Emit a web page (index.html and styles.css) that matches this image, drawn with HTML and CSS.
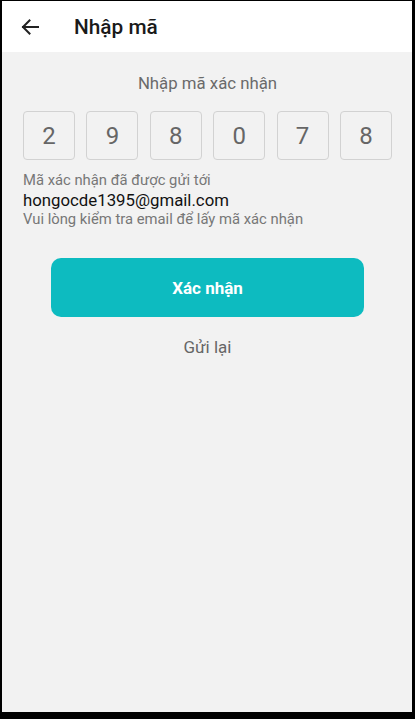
FILE: index.html
```html
<!DOCTYPE html>
<html lang="vi">
<head>
<meta charset="utf-8">
<title>Nhập mã</title>
<link rel="stylesheet" href="styles.css">
</head>
<body>
<div class="screen">
  <header class="appbar">
    <svg class="back" width="20" height="20" viewBox="0 0 20 20" aria-hidden="true">
      <path d="M18 10H3M9.5 3.5L3 10l6.5 6.5" fill="none" stroke="#222" stroke-width="2" stroke-linecap="square" stroke-linejoin="miter"/>
    </svg>
    <h1 class="title">Nhập mã</h1>
  </header>
  <main class="content">
    <p class="prompt">Nhập mã xác nhận</p>
    <div class="code">
      <div class="digit">2</div>
      <div class="digit">9</div>
      <div class="digit">8</div>
      <div class="digit">0</div>
      <div class="digit">7</div>
      <div class="digit">8</div>
    </div>
    <div class="info">
      <p class="muted">Mã xác nhận đã được gửi tới</p>
      <p class="email">hongocde1395@gmail.com</p>
      <p class="muted">Vui lòng kiểm tra email để lấy mã xác nhận</p>
    </div>
    <button class="confirm">Xác nhận</button>
    <p class="resend">Gửi lại</p>
  </main>
</div>
</body>
</html>
```

FILE: styles.css
```css
html, body {
  margin: 0;
  padding: 0;
  background: #000;
  height: 719px;
  overflow: hidden;
}
body {
  font-family: Roboto, "Noto Sans", sans-serif;
}
.screen {
  margin: 1px 3px 0 2px;
  height: 711px;
  background: #f2f2f2;
  display: flex;
  flex-direction: column;
}
.appbar {
  height: 51px;
  background: #fff;
  display: flex;
  align-items: center;
  flex-shrink: 0;
}
.back {
  margin-left: 18px;
}
.title {
  margin: 0 0 0 34px;
  font-size: 20.8px;
  font-weight: 500;
  color: #1a1a1a;
  line-height: 24px;
}
.content {
  flex: 1;
  padding: 0 20px 0 21px;
  display: flex;
  flex-direction: column;
}
.prompt {
  margin: 21px 0 0;
  text-align: center;
  font-size: 16.8px;
  line-height: 20px;
  color: #6a6a6a;
}
.code {
  margin-top: 18px;
  display: flex;
  justify-content: space-between;
}
.digit {
  width: 50px;
  height: 47px;
  border: 1px solid #d2d2d2;
  border-radius: 4px;
  display: flex;
  align-items: center;
  justify-content: center;
  font-size: 24px;
  color: #666;
}
.info {
  margin-top: 11px;
}
.info p {
  margin: 0;
}
.muted {
  font-size: 14.8px;
  line-height: 19px;
  color: #777;
}
.email {
  font-size: 16.8px;
  line-height: 20px;
  color: #111;
}
.confirm {
  margin: 29px 0 0 28px;
  width: 313px;
  height: 59px;
  border: none;
  border-radius: 10px;
  background: #0dbbc0;
  color: #fff;
  font-family: inherit;
  font-size: 17px;
  font-weight: 700;
}
.resend {
  margin: 20px 0 0;
  text-align: center;
  font-size: 17px;
  line-height: 20px;
  color: #666;
}
```
